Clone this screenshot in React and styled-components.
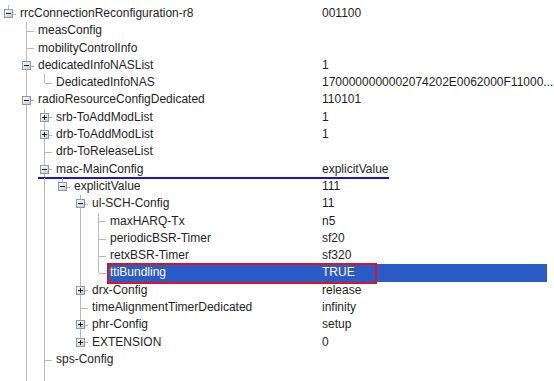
import React from 'react';
import styled, { createGlobalStyle } from 'styled-components';

const GlobalStyle = createGlobalStyle`
  html, body {
    margin: 0;
    padding: 0;
    background: #fff;
  }
  body {
    font-family: "Liberation Sans", Arial, sans-serif;
    font-size: 12px;
    color: #1e1e1e;
  }
`;

const ROW_H = 17.3;
const INDENT = 18;
const VALUE_X = 322;
const LINE = '#b8b8b8';

const TreePane = styled.div`
  width: 554px;
  height: 381px;
  padding-top: 5px;
  box-sizing: border-box;
  overflow: hidden;
  background: #fff;
  display: flex;
  flex-direction: column;
`;

const Row = styled.div`
  position: relative;
  display: flex;
  flex: 0 0 ${ROW_H}px;
  line-height: ${ROW_H}px;
  white-space: nowrap;
`;

// empty stretch below the last visible row, only the ongoing lines show
const Tail = styled.div`
  display: flex;
  flex: 1;
`;

const Rail = styled.div`
  position: relative;
  flex: 0 0 ${INDENT}px;

  &::before {
    content: '';
    display: ${p => (p.$on ? 'block' : 'none')};
    position: absolute;
    left: 8px;
    top: 0;
    bottom: 0;
    border-left: 1px solid ${LINE};
  }
`;

const Joint = styled.div`
  position: relative;
  flex: 0 0 ${INDENT}px;
  display: flex;
  align-items: center;
  padding-left: 4px;
  box-sizing: border-box;

  &::before {
    content: '';
    position: absolute;
    left: 8px;
    top: 0;
    height: ${p => (p.$last ? '50%' : '100%')};
    border-left: 1px solid ${LINE};
  }

  &::after {
    content: '';
    position: absolute;
    left: 9px;
    width: 7px;
    top: 50%;
    border-top: 1px solid ${LINE};
  }

  svg {
    position: relative;
    z-index: 1;
    display: block;
  }
`;

const Content = styled.div`
  flex: 1;
  display: flex;
  margin-right: 7px;
  background: ${p => (p.$selected ? '#2a5bc6' : 'transparent')};
  color: ${p => (p.$selected ? '#fff' : 'inherit')};
`;

const Label = styled.div`
  flex: 0 0 ${p => VALUE_X - INDENT * (p.$depth + 1)}px;
  padding-left: 2px;
  box-sizing: border-box;
`;

const Value = styled.div`
  flex: 1;
  overflow: hidden;
`;

const Underline = styled.div`
  position: absolute;
  left: 38px;
  width: 351px;
  bottom: -1px;
  height: 2px;
  background: #1414dc;
`;

const Outline = styled.div`
  position: absolute;
  left: 107px;
  width: 270px;
  top: -1px;
  bottom: -2px;
  border: 2px solid #dc1420;
  box-sizing: border-box;
`;

const Expander = ({ open }) => (
  <svg width="9" height="9" viewBox="0 0 9 9">
    <defs>
      <linearGradient id="expander-fill" x1="0" y1="0" x2="1" y2="1">
        <stop offset="0" stopColor="#ffffff" />
        <stop offset="1" stopColor="#c2c9d2" />
      </linearGradient>
    </defs>
    <rect x="0.5" y="0.5" width="8" height="8" fill="url(#expander-fill)" stroke="#8d99a6" />
    <path d="M2 4.5h5" stroke="#1c1c1c" />
    {!open && <path d="M4.5 2v5" stroke="#1c1c1c" />}
  </svg>
);

const tree = [
  {
    text: 'rrcConnectionReconfiguration-r8', value: '001100', children: [
      { text: 'measConfig' },
      { text: 'mobilityControlInfo' },
      {
        text: 'dedicatedInfoNASList', value: '1', children: [
          { text: 'DedicatedInfoNAS', value: '1700000000002074202E0062000F11000...' },
        ],
      },
      {
        text: 'radioResourceConfigDedicated', value: '110101', cont: true, children: [
          { text: 'srb-ToAddModList', value: '1', collapsed: true },
          { text: 'drb-ToAddModList', value: '1', collapsed: true },
          { text: 'drb-ToReleaseList' },
          {
            text: 'mac-MainConfig', value: 'explicitValue', underline: true, children: [
              {
                text: 'explicitValue', value: '111', children: [
                  {
                    text: 'ul-SCH-Config', value: '11', children: [
                      { text: 'maxHARQ-Tx', value: 'n5' },
                      { text: 'periodicBSR-Timer', value: 'sf20' },
                      { text: 'retxBSR-Timer', value: 'sf320' },
                      { text: 'ttiBundling', value: 'TRUE', selected: true },
                    ],
                  },
                  { text: 'drx-Config', value: 'release', collapsed: true },
                  { text: 'timeAlignmentTimerDedicated', value: 'infinity' },
                  { text: 'phr-Config', value: 'setup', collapsed: true },
                  { text: 'EXTENSION', value: '0', collapsed: true },
                ],
              },
            ],
          },
          { text: 'sps-Config', cont: true },
        ],
      },
    ],
  },
];

// walk the tree into rows, remembering which ancestor lines keep going
const flatten = (nodes, depth, rails, out) => {
  nodes.forEach((node, i) => {
    const last = i === nodes.length - 1 && !node.cont;
    out.push({ ...node, depth, rails, last });
    if (node.children) flatten(node.children, depth + 1, [...rails, !last], out);
  });
  return out;
};

const rows = flatten(tree, 0, [], []);
const lastRow = rows[rows.length - 1];
const tailRails = [...lastRow.rails, !lastRow.last];

const App = () => (
  <>
    <GlobalStyle />
    <TreePane>
      {rows.map((row, index) => (
        <Row key={index}>
          {row.rails.map((on, i) => <Rail key={i} $on={on} />)}
          <Joint $last={row.last}>
            {(row.children || row.collapsed) && <Expander open={!!row.children} />}
          </Joint>
          <Content $selected={row.selected}>
            <Label $depth={row.depth}>{row.text}</Label>
            <Value>{row.value}</Value>
          </Content>
          {row.underline && <Underline />}
          {row.selected && <Outline />}
        </Row>
      ))}
      <Tail>
        {tailRails.map((on, i) => <Rail key={i} $on={on} />)}
      </Tail>
    </TreePane>
  </>
);

export default App;
